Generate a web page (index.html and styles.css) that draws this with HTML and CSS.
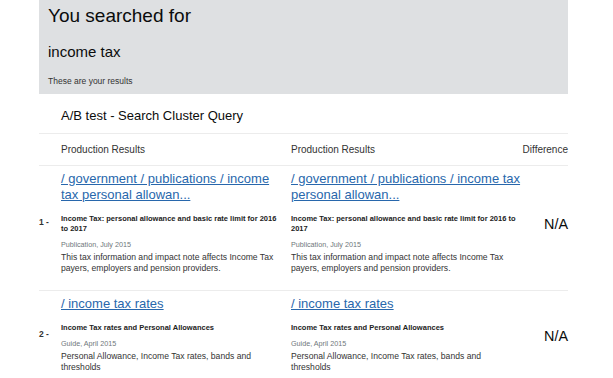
FILE: index.html
```html
<!DOCTYPE html>
<html lang="en">

<head>
    <meta charset="UTF-8">
    <meta name="viewport" content="width=device-width, initial-scale=1.0">
    <title>Search Cluster Query</title>
    <link rel="stylesheet" href="styles.css">
</head>

<body>
    <div class="page">
        <header class="search-banner">
            <h1>You searched for</h1>
            <h2>income tax</h2>
            <p>These are your results</p>
        </header>

        <div class="test-title">A/B test - Search Cluster Query</div>

        <div class="results">
            <div class="results__row results__row--head">
                <div></div>
                <div>Production Results</div>
                <div>Production Results</div>
                <div class="results__diff">Difference</div>
            </div>

            <div class="results__row">
                <div class="results__num">1 -</div>
                <div class="result">
                    <a href="#">/ government / publications / income tax personal allowan...</a>
                    <h3>Income Tax: personal allowance and basic rate limit for 2016 to 2017</h3>
                    <p class="result__meta">Publication, July 2015</p>
                    <p class="result__desc">This tax information and impact note affects Income Tax payers, employers and pension providers.</p>
                </div>
                <div class="result">
                    <a href="#">/ government / publications / income tax personal allowan...</a>
                    <h3>Income Tax: personal allowance and basic rate limit for 2016 to 2017</h3>
                    <p class="result__meta">Publication, July 2015</p>
                    <p class="result__desc">This tax information and impact note affects Income Tax payers, employers and pension providers.</p>
                </div>
                <div class="results__diff results__na">N/A</div>
            </div>

            <div class="results__row">
                <div class="results__num">2 -</div>
                <div class="result">
                    <a href="#">/ income tax rates</a>
                    <h3>Income Tax rates and Personal Allowances</h3>
                    <p class="result__meta">Guide, April 2015</p>
                    <p class="result__desc">Personal Allowance, Income Tax rates, bands and thresholds</p>
                </div>
                <div class="result">
                    <a href="#">/ income tax rates</a>
                    <h3>Income Tax rates and Personal Allowances</h3>
                    <p class="result__meta">Guide, April 2015</p>
                    <p class="result__desc">Personal Allowance, Income Tax rates, bands and thresholds</p>
                </div>
                <div class="results__diff results__na">N/A</div>
            </div>
        </div>
    </div>
</body>

</html>
```

FILE: styles.css
```css
body {
    margin: 0;
    color: #0b0c0c;
    font-family: "Liberation Sans", Arial, sans-serif;
    background: #fff;
}

.page {
    margin-left: 39px;
    width: 529px;
}

.search-banner {
    background-color: #dee0e2;
    padding: 5px 9px 8px;
}

.search-banner h1 {
    margin: 0;
    font-size: 19px;
    font-weight: 400;
    line-height: 22px;
}

.search-banner h2 {
    margin: 16px 0 0;
    font-size: 15px;
    font-weight: 400;
    line-height: 18px;
}

.search-banner p {
    margin: 15px 0 0;
    font-size: 8.5px;
    line-height: 10px;
    color: #333;
}

.test-title {
    padding: 14px 0 9px 22px;
    font-size: 13px;
    line-height: 16px;
    border-bottom: 1px solid #ececec;
}

.results__row {
    display: grid;
    grid-template-columns: 22px 230px 1fr auto;
    border-bottom: 1px solid #ececec;
    padding: 5px 0 16.5px;
}

.results__row--head {
    padding: 10px 0 9px;
    font-size: 10px;
    line-height: 12px;
    color: #333;
}

.results__num {
    align-self: center;
    font-size: 8.5px;
    font-weight: 700;
    color: #333;
}

.results__diff {
    text-align: right;
}

.results__na {
    align-self: center;
    font-size: 14.4px;
    padding-top: 4px;
}

.result {
    padding-right: 8px;
}

.result + .result {
    width: 230px;
}

.result a {
    display: block;
    color: #2867ac;
    font-size: 13px;
    line-height: 16px;
}

.result h3 {
    margin: 11px 0 0;
    font-size: 7.5px;
    font-weight: 700;
    line-height: 10px;
    color: #222;
}

.result__meta {
    margin: 6px 0 0;
    font-size: 7.2px;
    line-height: 10px;
    color: #6f777b;
}

.result__desc {
    margin: 1.5px 0 0;
    font-size: 8.6px;
    line-height: 11px;
    color: #333;
}
```
